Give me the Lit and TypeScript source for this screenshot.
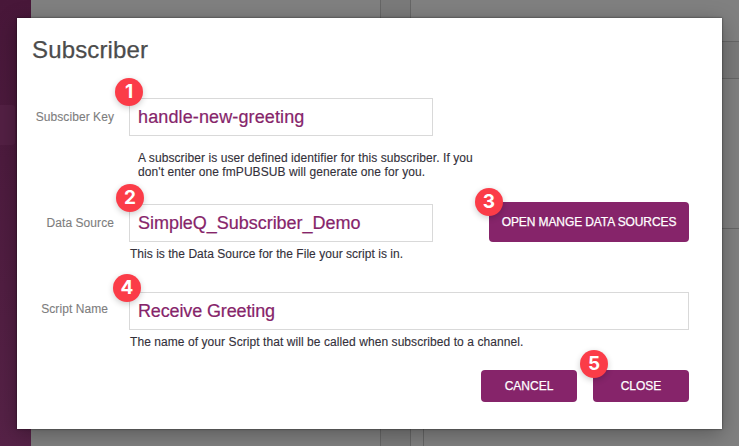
import { LitElement, html, css } from "lit";
import { customElement, property } from "lit/decorators.js";

@customElement("step-badge")
class StepBadge extends LitElement {
  @property() n = "";

  static styles = css`
    :host {
      position: absolute;
      width: 28px;
      height: 28px;
      border-radius: 50%;
      background: #fb3c48;
      box-shadow: 0 2px 6px rgba(0, 0, 0, 0.2);
      color: #fff;
      font: 700 19px/28px Inter, "Liberation Sans", sans-serif;
      text-align: center;
      z-index: 2;
    }
  `;

  render() {
    return html`${this.n}`;
  }
}

@customElement("app-root")
class AppRoot extends LitElement {
  static styles = css`
    :host {
      display: grid;
      grid-template-columns: 31px 349px 31px 1fr;
      position: relative;
      box-sizing: border-box;
      width: 739px;
      height: 446px;
      overflow: hidden;
      background: #808080;
      font-family: "Liberation Sans", Arial, sans-serif;
      font-size: 12px;
      color: #33303a;
    }
    * {
      box-sizing: border-box;
    }
    .side {
      background: linear-gradient(#481739, #562247);
      padding-top: 105px;
    }
    .side-item {
      width: 15px;
      height: 40px;
      border-radius: 0 3px 3px 0;
      background: #532044;
    }
    .gutter {
      background: #7a7a7a;
      border: solid #666;
      border-width: 0 1px;
    }
    .detail {
      display: flex;
      flex-direction: column;
    }
    .head {
      height: 41px;
    }
    .bar {
      height: 38px;
      background: #7a7a7a;
      border: solid #666;
      border-width: 1px 0;
    }
    .pane {
      height: 150px;
      border-bottom: 1px solid #666;
    }
    .rest {
      flex: 1;
      margin-left: 12px;
      border-left: 1px solid #666;
    }
    .dialog {
      position: absolute;
      left: 17px;
      top: 18px;
      width: 705px;
      height: 411px;
      padding: 0 33px 27px 15px;
      display: flex;
      flex-direction: column;
      background: #fff;
      box-shadow: 0 0 2px rgba(0, 0, 0, 0.6), 0 5px 20px rgba(0, 0, 0, 0.3);
    }
    h1 {
      margin: 17px 0 33px;
      font-size: 24px;
      line-height: 30px;
      font-weight: 400;
      letter-spacing: 0.15px;
      color: #4c4c4c;
      -webkit-text-stroke: 0.25px #4c4c4c;
    }
    .row {
      display: grid;
      grid-template-columns: 82px 304px 1fr;
      column-gap: 15px;
      height: 38px;
      align-items: start;
    }
    .row.wide {
      grid-template-columns: 82px 1fr;
    }
    label {
      height: 38px;
      line-height: 38px;
      text-align: right;
      letter-spacing: 0.07px;
      color: #7d7d7d;
      white-space: nowrap;
      -webkit-text-stroke: 0.1px #7d7d7d;
    }
    .wide label {
      padding-right: 6px;
      line-height: 34px;
    }
    .field {
      position: relative;
      height: 38px;
      padding-left: 8px;
      border: 1px solid #d9d9d9;
      font-size: 18px;
      line-height: 36px;
      letter-spacing: 0.12px;
      color: #86246a;
      white-space: nowrap;
      -webkit-text-stroke: 0.2px #86246a;
    }
    .field.source {
      letter-spacing: -0.03px;
    }
    .field.script {
      letter-spacing: -0.13px;
    }
    .help {
      margin-left: 98px;
      line-height: 14px;
      white-space: nowrap;
      -webkit-text-stroke: 0.12px #33303a;
    }
    .help.intro {
      margin: 15px 0 25px 106px;
      height: 28px;
      letter-spacing: 0.08px;
    }
    .help.source {
      margin-top: 5px;
      height: 45px;
      letter-spacing: 0.03px;
    }
    .help.script {
      margin-top: 5px;
      height: 35px;
      letter-spacing: 0.07px;
    }
    .btn {
      position: relative;
      width: 96px;
      height: 32px;
      border-radius: 4px;
      background: #86246a;
      color: #fff;
      line-height: 32px;
      text-align: center;
      white-space: nowrap;
      -webkit-text-stroke: 0.25px #fff;
    }
    .btn.manage {
      width: 200px;
      height: 40px;
      margin-top: -2px;
      line-height: 40px;
      letter-spacing: -0.1px;
      justify-self: end;
    }
    .actions {
      display: flex;
      justify-content: flex-end;
      gap: 16px;
    }
    .b1 { left: -15px; top: -21px; }
    .b2 { left: -14px; top: -21px; }
    .b3 { left: -14px; top: -14px; }
    .b4 { left: -17px; top: -19px; }
    .b5 { left: -13px; top: -20px; }
    step-badge {
      -webkit-text-stroke: 0;
      letter-spacing: 0;
    }
  `;

  render() {
    return html`
      <div class="side"><div class="side-item"></div></div>
      <div></div>
      <div class="gutter"></div>
      <div class="detail">
        <div class="head"></div>
        <div class="bar"></div>
        <div class="pane"></div>
        <div class="rest"></div>
      </div>
      <div class="dialog">
        <h1>Subscriber</h1>
        <div class="row">
          <label>Subsciber Key</label>
          <div class="field"><step-badge class="b1" n="1"></step-badge>handle-new-greeting</div>
        </div>
        <div class="help intro">
          A subscriber is user defined identifier for this subscriber. If you<br />don't enter one fmPUBSUB will generate one for you.
        </div>
        <div class="row">
          <label>Data Source</label>
          <div class="field source"><step-badge class="b2" n="2"></step-badge>SimpleQ_Subscriber_Demo</div>
          <div class="btn manage"><step-badge class="b3" n="3"></step-badge>OPEN MANGE DATA SOURCES</div>
        </div>
        <div class="help source">This is the Data Source for the File your script is in.</div>
        <div class="row wide">
          <label>Script Name</label>
          <div class="field script"><step-badge class="b4" n="4"></step-badge>Receive Greeting</div>
        </div>
        <div class="help script">The name of your Script that will be called when subscribed to a channel.</div>
        <div class="actions">
          <div class="btn">CANCEL</div>
          <div class="btn"><step-badge class="b5" n="5"></step-badge>CLOSE</div>
        </div>
      </div>
    `;
  }
}
